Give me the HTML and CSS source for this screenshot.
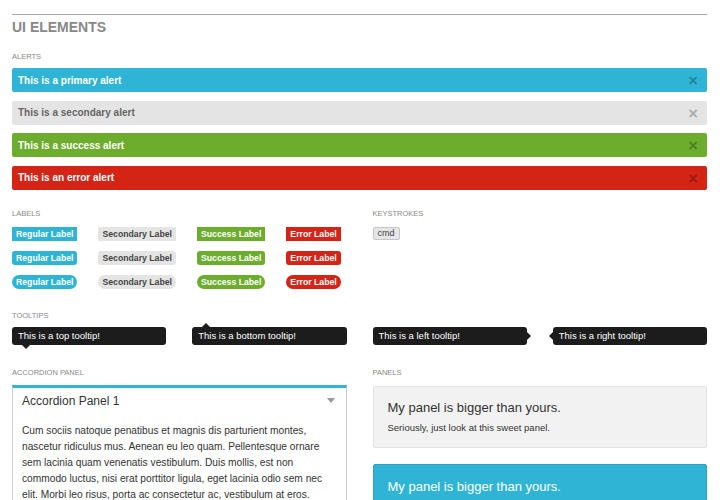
FILE: index.html
```html
<!DOCTYPE html>
<html lang="en">
<head>
    <meta charset="UTF-8">
    <title>UI Elements</title>
    <link rel="stylesheet" href="styles.css">
</head>
<body>
    <div class="page">
        <hr class="rule">
        <h1 class="page-title">UI ELEMENTS</h1>

        <div class="section-title">ALERTS</div>
        <div class="alerts">
            <div class="alert primary">This is a primary alert<span class="close">&times;</span></div>
            <div class="alert secondary">This is a secondary alert<span class="close">&times;</span></div>
            <div class="alert success">This is a success alert<span class="close">&times;</span></div>
            <div class="alert error">This is an error alert<span class="close">&times;</span></div>
        </div>

        <div class="columns">
            <div class="col">
                <div class="section-title">LABELS</div>
                <div class="label-row">
                    <span class="label primary">Regular Label</span>
                    <span class="label secondary">Secondary Label</span>
                    <span class="label success">Success Label</span>
                    <span class="label error">Error Label</span>
                </div>
                <div class="label-row radius">
                    <span class="label primary">Regular Label</span>
                    <span class="label secondary">Secondary Label</span>
                    <span class="label success">Success Label</span>
                    <span class="label error">Error Label</span>
                </div>
                <div class="label-row round">
                    <span class="label primary">Regular Label</span>
                    <span class="label secondary">Secondary Label</span>
                    <span class="label success">Success Label</span>
                    <span class="label error">Error Label</span>
                </div>
            </div>
            <div class="col">
                <div class="section-title">KEYSTROKES</div>
                <kbd class="key">cmd</kbd>
            </div>

            <div class="col wide">
                <div class="section-title">TOOLTIPS</div>
                <div class="tooltips">
                    <div class="tip tip-top">This is a top tooltip!</div>
                    <div class="tip tip-bottom">This is a bottom tooltip!</div>
                    <div class="tip tip-left">This is a left tooltip!</div>
                    <div class="tip tip-right">This is a right tooltip!</div>
                </div>
            </div>

            <div class="col">
                <div class="section-title">ACCORDION PANEL</div>
                <div class="accordion">
                    <div class="accordion-head">
                        Accordion Panel 1
                        <span class="caret"></span>
                    </div>
                    <div class="accordion-body">
                        Cum sociis natoque penatibus et magnis dis parturient montes, nascetur ridiculus mus. Aenean eu leo quam. Pellentesque ornare sem lacinia quam venenatis vestibulum. Duis mollis, est non commodo luctus, nisi erat porttitor ligula, eget lacinia odio sem nec elit. Morbi leo risus, porta ac consectetur ac, vestibulum at eros.
                    </div>
                </div>
            </div>
            <div class="col">
                <div class="section-title">PANELS</div>
                <div class="panel">
                    <div class="panel-title">My panel is bigger than yours.</div>
                    <div class="panel-text">Seriously, just look at this sweet panel.</div>
                </div>
                <div class="panel callout">
                    <div class="panel-title">My panel is bigger than yours.</div>
                </div>
            </div>
        </div>
    </div>
</body>
</html>
```

FILE: styles.css
```css
body {
    margin: 0;
    font-family: "Liberation Sans", Arial, sans-serif;
    color: #333;
    background: white;
    overflow: hidden;
}

.page {
    padding: 14px 13px 0 12px;
}

.rule {
    margin: 0;
    border: none;
    border-top: 1px solid #aaa;
}

.page-title {
    margin: 4px 0 0;
    font-size: 14px;
    line-height: 16px;
    color: #888;
}

.section-title {
    font-size: 7.5px;
    line-height: 10px;
    color: #888;
    margin-bottom: 6px;
}

.page-title + .section-title {
    margin-top: 17px;
}

/* alerts */
.alerts {
    margin-bottom: 19px;
}

.alert {
    display: flex;
    align-items: center;
    justify-content: space-between;
    height: 24px;
    padding: 0 8px 0 6px;
    margin-bottom: 8.5px;
    border-radius: 2px;
    font-size: 10px;
    font-weight: bold;
    color: white;
}

.alert.primary { background: #2fb4d5; }
.alert.secondary { background: #e4e4e4; color: #666; }
.alert.success { background: #6dad2e; }
.alert.error { background: #d32415; }

.close {
    font-family: "DejaVu Sans", sans-serif;
    font-size: 14px;
    font-weight: bold;
    color: rgba(0,0,0,0.3);
}

.alert.secondary .close {
    color: #aaa;
}

/* columns */
.columns {
    display: grid;
    grid-template-columns: 1fr 1fr;
    column-gap: 26px;
}

.wide {
    grid-column: span 2;
    margin-top: 22px;
}

.columns .col:nth-child(1) .section-title,
.columns .col:nth-child(2) .section-title {
    margin-bottom: 8px;
}

/* labels */
.label-row {
    display: flex;
    gap: 21px;
    margin-bottom: 10px;
}

.label-row:last-child {
    margin-bottom: 0;
}

.label {
    height: 14px;
    line-height: 14px;
    padding: 0 4px;
    font-size: 8.7px;
    font-weight: bold;
    color: white;
}

.label.primary { background: #2fb4d5; }
.label.secondary { background: #e4e4e4; color: #444; }
.label.success { background: #6dad2e; }
.label.error { background: #d32415; }

.radius .label { border-radius: 3px; }
.round .label { border-radius: 7px; }

.key {
    display: block;
    width: fit-content;
    height: 11px;
    line-height: 11px;
    padding: 0 4px;
    font-family: "Liberation Sans", Arial, sans-serif;
    font-size: 9px;
    color: #444;
    background: #e6e6e6;
    border: 1px solid #c6c6c6;
    border-radius: 2px;
}

/* tooltips */
.tooltips {
    display: grid;
    grid-template-columns: repeat(4, 1fr);
    column-gap: 26px;
}

.tip {
    position: relative;
    height: 18px;
    line-height: 18px;
    padding: 0 6px;
    font-size: 9.5px;
    color: white;
    background: #1c1c1c;
    border-radius: 3px;
}

.tip::after {
    content: "";
    position: absolute;
    border: 4px solid transparent;
}

.tip-top::after {
    top: 18px;
    left: 10px;
    border-top-color: #1c1c1c;
}

.tip-bottom::after {
    top: -8px;
    left: 10px;
    border-bottom-color: #1c1c1c;
}

.tip-left::after {
    top: 5px;
    right: -8px;
    border-left-color: #1c1c1c;
}

.tip-right::after {
    top: 5px;
    left: -8px;
    border-right-color: #1c1c1c;
}

/* accordion */
.columns .col:nth-child(4),
.columns .col:nth-child(5) {
    margin-top: 23px;
}

.columns .col:nth-child(4) .section-title {
    margin-bottom: 7px;
}

.columns .col:nth-child(5) .section-title {
    margin-bottom: 8px;
}

.accordion {
    border: 1px solid #ccc;
    border-top: 3px solid #2fb4d5;
    border-bottom: none;
}

.accordion-head {
    display: flex;
    align-items: center;
    justify-content: space-between;
    height: 26px;
    padding: 0 10px 0 9px;
    font-size: 12px;
    color: #333;
}

.caret {
    border: 4px solid transparent;
    border-top: 5px solid #999;
    border-bottom: none;
    margin-right: 1px;
}

.accordion-body {
    padding: 9px 8px 10px 9px;
    font-size: 10.2px;
    line-height: 16px;
    color: #333;
}

/* panels */
.panel {
    padding: 13px 14px;
    background: #f2f2f2;
    border: 1px solid #e2e2e2;
    border-radius: 2px;
    margin-bottom: 16px;
}

.panel-title {
    font-size: 13px;
    line-height: 16px;
    color: #333;
}

.panel-text {
    margin-top: 6px;
    font-size: 9.5px;
    line-height: 12px;
    color: #333;
}

.panel.callout {
    padding-top: 14px;
    background: #2fb4d5;
    border-color: #2aa2c0;
}

.callout .panel-title {
    color: white;
}
```
